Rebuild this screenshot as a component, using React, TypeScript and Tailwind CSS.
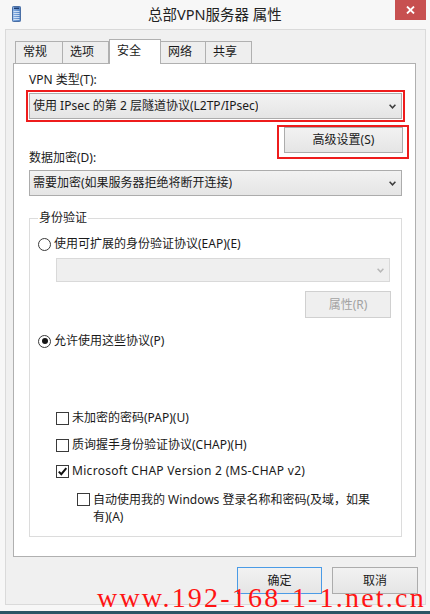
import type { ReactNode } from "react";
import clsx from "clsx";

const ui =
  "font-['Noto_Sans','Noto_Sans_CJK_SC',sans-serif] text-[12px] leading-[16px] text-[#1a1a1a]";

function ServerIcon() {
  return (
    <svg width="9" height="16" viewBox="0 0 9 16">
      <defs>
        <linearGradient id="srv" x1="0" x2="1" y1="0" y2="0">
          <stop offset="0" stopColor="#8db4e6" />
          <stop offset="1" stopColor="#4f7fc0" />
        </linearGradient>
      </defs>
      <rect x="0.5" y="0.5" width="8" height="15" rx="0.8" fill="url(#srv)" stroke="#4a6fa5" />
      <rect x="2" y="1.6" width="5" height="1.4" fill="#1e3c70" />
      {[5, 7, 9, 11, 13].map((y) => (
        <rect key={y} x="1.5" y={y} width="6" height="0.8" fill="#e6f0fb" />
      ))}
    </svg>
  );
}

function Chevron({ light }: { light?: boolean }) {
  return (
    <svg width="7" height="5" viewBox="0 0 7 5" className="shrink-0">
      <path
        d="M0.6 0.8 L3.5 3.8 L6.4 0.8"
        fill="none"
        stroke={light ? "#b8b8b8" : "#3c3c3c"}
        strokeWidth="1.5"
      />
    </svg>
  );
}

function Combo({ text, disabled, className }: { text?: string; disabled?: boolean; className?: string }) {
  return (
    <div
      className={clsx(
        "flex items-center justify-between border pl-[3px] pr-[5px]",
        disabled
          ? "border-[#d9d9d9] bg-[#efefef]"
          : "border-[#acacac] bg-linear-to-b from-[#f2f2f2] to-[#e5e5e5]",
        className
      )}
    >
      <span className="truncate">{text}</span>
      <Chevron light={disabled} />
    </div>
  );
}

function Btn({
  children,
  className,
  primary,
  disabled,
}: {
  children: ReactNode;
  className?: string;
  primary?: boolean;
  disabled?: boolean;
}) {
  return (
    <button
      type="button"
      className={clsx(
        "flex items-center justify-center border",
        disabled
          ? "border-[#d0d0d0] bg-[#efefef] text-[#a3a3a3]"
          : "bg-linear-to-b from-[#f2f2f2] to-[#e5e5e5]",
        primary ? "border-[#4a9be6]" : !disabled && "border-[#acacac]",
        className
      )}
    >
      {children}
    </button>
  );
}

function Radio({ checked }: { checked?: boolean }) {
  return (
    <span className="flex h-[13px] w-[13px] shrink-0 items-center justify-center rounded-full border border-[#3a3a3a] bg-white">
      {checked && <span className="h-[6px] w-[6px] rounded-full bg-[#151515]" />}
    </span>
  );
}

function Check({ checked }: { checked?: boolean }) {
  return (
    <span className="flex h-[13px] w-[13px] shrink-0 items-center justify-center border border-[#3a3a3a] bg-white">
      {checked && (
        <svg width="11" height="11" viewBox="0 0 11 11">
          <path d="M1.8 5.6 L4.3 8.2 L9.3 2.2" fill="none" stroke="#111" strokeWidth="2" />
        </svg>
      )}
    </span>
  );
}

function Tab({ label, width, active }: { label: string; width: string; active?: boolean }) {
  return (
    <div
      className={clsx(
        "border border-b-0 border-[#b0b0b0]",
        width,
        active
          ? "relative z-10 -mb-px h-[25px] bg-white pl-[7px] pt-[3px]"
          : "-ml-px h-[22px] bg-[#eeeeee] pl-[7px] pt-[2px] first:ml-0"
      )}
    >
      {label}
    </div>
  );
}

export default function App() {
  return (
    <div className={`relative flex h-[614px] w-[430px] flex-col overflow-hidden bg-[#f7f7f7] ${ui}`}>
      {/* title bar */}
      <div className="flex h-[29px] shrink-0 items-start">
        <div className="flex w-[100px] pl-[12px] pt-[6px]">
          <ServerIcon />
        </div>
        <div className="flex-1 pt-[5px] text-center text-[14.5px] leading-[18px] text-[#222]">
          总部VPN服务器 属性
        </div>
        <div className="flex w-[100px] justify-end pr-[4px]">
          <div className="flex h-[20px] w-[31px] items-center justify-center bg-[#c75050]">
            <svg width="9" height="8" viewBox="0 0 9 8">
              <path d="M1 0.5 L8 7.5 M8 0.5 L1 7.5" stroke="#fff" strokeWidth="1.8" />
            </svg>
          </div>
        </div>
      </div>

      {/* client area */}
      <div className="ml-[5px] flex h-[576px] w-[421px] shrink-0 flex-col border border-[#dadada] bg-[#f0f0f0]">
        <div className="ml-[7px] mt-[9px] w-[403px]">
          <div className="flex h-[24px] items-end pl-[2px]">
            <Tab label="常规" width="w-[48px]" />
            <Tab label="选项" width="w-[47px]" />
            <Tab label="安全" width="w-[52px]" active />
            <Tab label="网络" width="w-[46px]" />
            <Tab label="共享" width="w-[47px]" />
          </div>

          <div className="flex h-[494px] flex-col border border-[#b0b0b0] bg-white">
            <div className="ml-[15px] mt-[8px]">VPN 类型(T):</div>

            <div className="ml-[12px] mt-[2px] h-[32px] w-[379px] border-2 border-[#ee1c1c] p-px">
              <Combo text="使用 IPsec 的第 2 层隧道协议(L2TP/IPsec)" className="h-full" />
            </div>

            <div className="mr-[6px] mt-[3px] flex h-[34px] w-[132px] self-end border-2 border-[#ee1c1c] pb-[4px] pl-[5px] pr-[4px]">
              <Btn className="h-[26px] w-[119px]">高级设置(S)</Btn>
            </div>

            <div className="-mt-[9px] ml-[15px]">数据加密(D):</div>
            <Combo text="需要加密(如果服务器拒绝将断开连接)" className="ml-[15px] mt-[4px] h-[26px] w-[373px]" />

            <div className="relative ml-[15px] mt-[22px] flex h-[319px] w-[373px] flex-col border border-[#dcdcdc]">
              <span className="absolute -top-[9px] left-[8px] bg-white px-px">身份验证</span>

              <label className="mt-[17px] flex items-center gap-[3px] pl-[8px]">
                <Radio />
                使用可扩展的身份验证协议(EAP)(E)
              </label>
              <Combo disabled className="ml-[26px] mt-[6px] h-[24px] w-[334px]" />
              <Btn disabled className="mr-[10px] mt-[9px] h-[27px] w-[86px] self-end">
                属性(R)
              </Btn>

              <label className="mt-[15px] flex items-center gap-[3px] pl-[8px]">
                <Radio checked />
                允许使用这些协议(P)
              </label>

              <label className="ml-[26px] mt-[61px] flex items-center gap-[3px]">
                <Check />
                未加密的密码(PAP)(U)
              </label>
              <label className="ml-[26px] mt-[11px] flex items-center gap-[3px]">
                <Check />
                质询握手身份验证协议(CHAP)(H)
              </label>
              <label className="ml-[26px] mt-[10px] flex items-center gap-[3px]">
                <Check checked />
                <span className="tracking-[0.3px]">Microsoft CHAP Version 2 (MS-CHAP v2)</span>
              </label>
              <label className="ml-[47px] mt-[12px] flex items-start gap-[3px] leading-[17px]">
                <span className="mt-[2px]">
                  <Check />
                </span>
                <span>
                  自动使用我的 Windows 登录名称和密码(及域，如果
                  <br />
                  有)(A)
                </span>
              </label>
            </div>
          </div>
        </div>

        <div className="mt-[10px] flex justify-end gap-[10px] pr-[7px]">
          <Btn primary className="h-[27px] w-[85px]">
            确定
          </Btn>
          <Btn className="h-[27px] w-[86px]">取消</Btn>
        </div>
      </div>

      <div className="mt-auto h-[3px] bg-[#2a5666]" />

      <div className="absolute left-[97px] top-[584px] whitespace-nowrap font-['Liberation_Serif',serif] text-[28px] leading-[28px] tracking-[2.2px] text-[#ff1414]">
        www.192-168-1-1.net.cn
      </div>
    </div>
  );
}
